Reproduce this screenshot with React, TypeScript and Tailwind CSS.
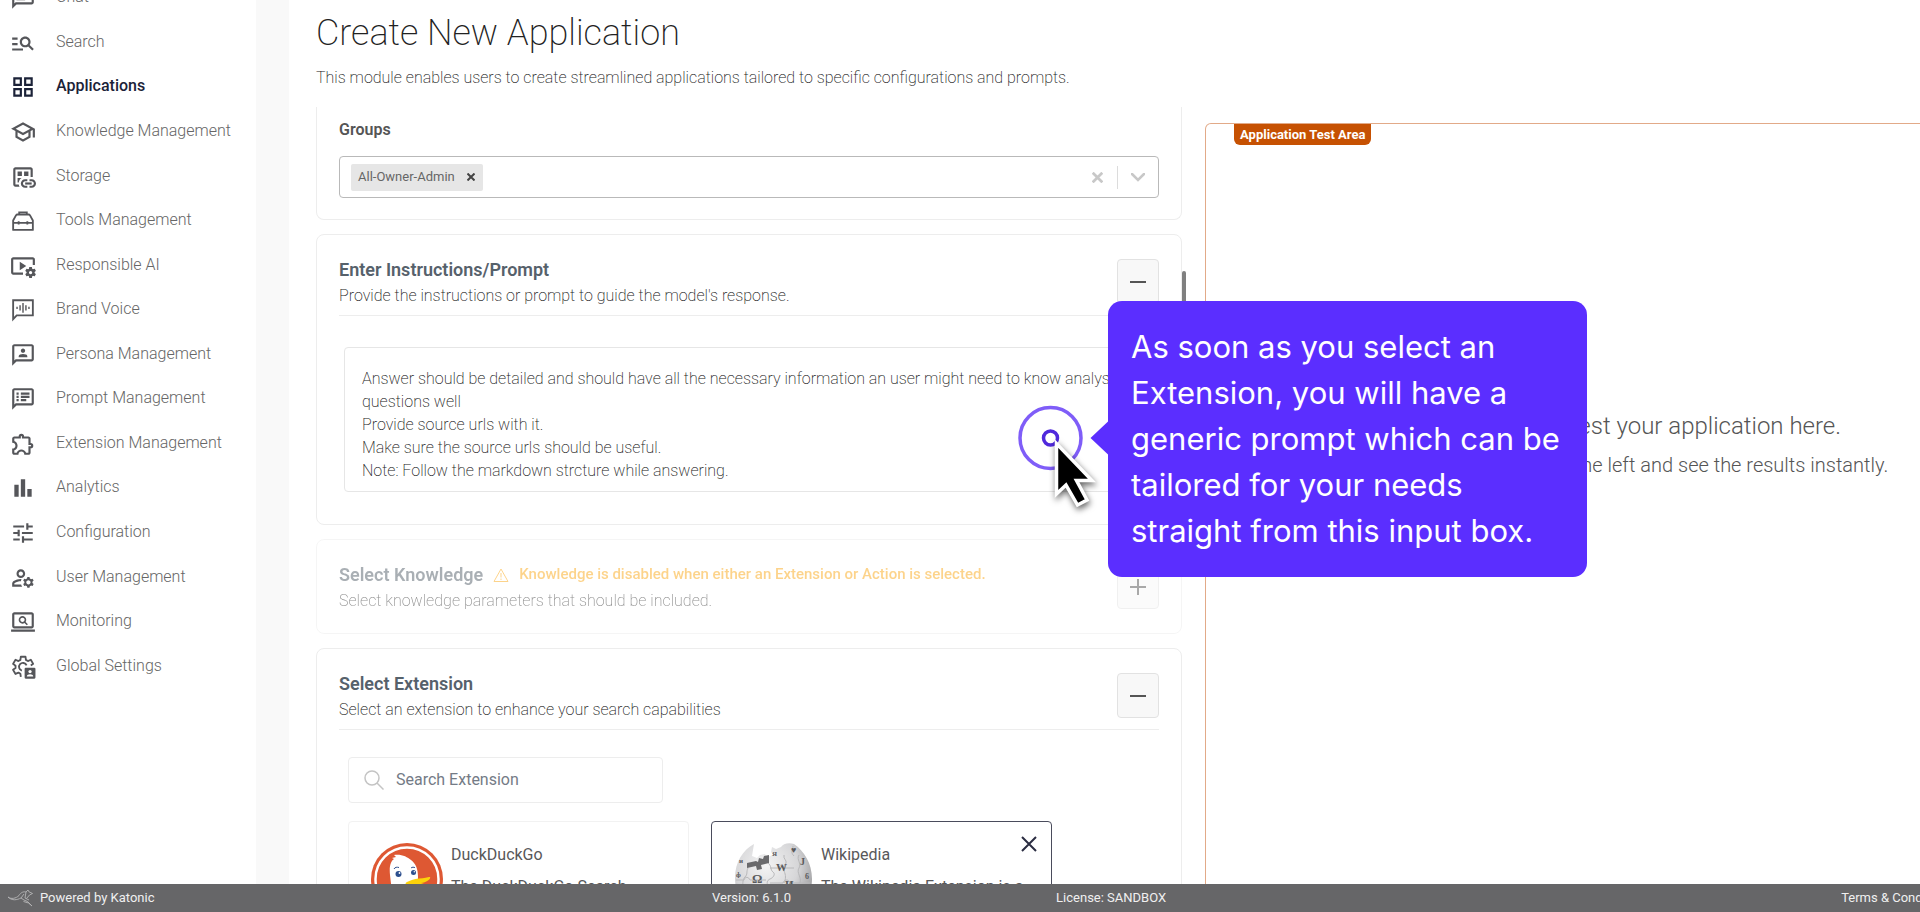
import React, { useState } from 'react';
import type { IconType } from 'react-icons';
import {
  MdBarChart,
  MdManageSearch,
  MdOutline3P,
  MdOutlineChat,
  MdOutlineDatasetLinked,
  MdOutlineExtension,
  MdOutlineGridView,
  MdOutlineManageAccounts,
  MdOutlineSchool,
  MdOutlineScreenSearchDesktop,
  MdOutlineSpeakerNotes,
  MdOutlineTune,
  MdOutlineVideoSettings,
} from 'react-icons/md';

const ToolboxIcon: React.FC = () => (
  <svg width="26" height="26" viewBox="0 0 24 24" fill="none" stroke="currentColor" strokeWidth="1.7">
    <path d="M2.900 20.200V11.500L5.500 6.800Q6 6 7 6h10q1 0 1.500.8l2.600 4.700v8.700z" strokeLinejoin="round" />
    <path d="M8.500 5.800V4h7v1.800M3 13.800h18M8 12.300v3M16 12.300v3" />
  </svg>
);

const VoiceIcon: React.FC = () => (
  <svg width="26" height="26" viewBox="0 0 24 24" fill="none" stroke="currentColor" strokeWidth="1.7">
    <path d="M2.900 20.500V3h18.200v14H6.200z" />
    <path d="M6.500 9v2M9.300 7.500v5M12 5.500v9M14.700 7.500v5M17.500 9v2" strokeWidth="1.300" />
  </svg>
);

const GlobalSettingsIcon: React.FC = () => (
  <svg width="26" height="26" viewBox="0 0 24 24" fill="none">
    <path
      d="M10 21.200 9.600 18.300 7.800 17.200 5.100 18.400 2.800 14.600 5.100 12.900V10.800L2.800 9.100 5.100 5.300 7.800 6.500 9.600 5.400 10 2.500h4.300l.4 2.900 1.800 1.100 2.700-1.200L21.400 9.100 19.200 10.700"
      stroke="currentColor"
      strokeWidth="1.7"
      strokeLinejoin="round"
    />
    <path d="M11 15.300a3.600 3.600 0 1 1 4.300-4.800" stroke="currentColor" strokeWidth="1.7" />
    <rect x="13.500" y="12.800" width="10" height="10" rx="1" fill="currentColor" />
    <circle cx="18.500" cy="16.200" r="1.500" fill="white" />
    <path d="M15.500 20.800c0-1.600 1.500-2.200 3-2.200s3 .6 3 2.200z" fill="white" />
  </svg>
);

const NAV: { label: string; icon: IconType | React.FC; active?: boolean }[] = [
  { label: 'Chat', icon: MdOutlineChat },
  { label: 'Search', icon: MdManageSearch },
  { label: 'Applications', icon: MdOutlineGridView, active: true },
  { label: 'Knowledge Management', icon: MdOutlineSchool },
  { label: 'Storage', icon: MdOutlineDatasetLinked },
  { label: 'Tools Management', icon: ToolboxIcon },
  { label: 'Responsible AI', icon: MdOutlineVideoSettings },
  { label: 'Brand Voice', icon: VoiceIcon },
  { label: 'Persona Management', icon: MdOutline3P },
  { label: 'Prompt Management', icon: MdOutlineSpeakerNotes },
  { label: 'Extension Management', icon: MdOutlineExtension },
  { label: 'Analytics', icon: MdBarChart },
  { label: 'Configuration', icon: MdOutlineTune },
  { label: 'User Management', icon: MdOutlineManageAccounts },
  { label: 'Monitoring', icon: MdOutlineScreenSearchDesktop },
  { label: 'Global Settings', icon: GlobalSettingsIcon },
];

const DEFAULT_PROMPT = `Answer should be detailed and should have all the necessary information an user might need to know analyse the questions well
Provide source urls with it.
Make sure the source urls should be useful.
Note: Follow the markdown strcture while answering.`;

const Sidebar: React.FC = () => (
  <aside className="w-64 shrink-0 bg-white">
    <nav className="-mt-[25px] grid h-[713px] auto-rows-fr">
      {NAV.map(({ label, icon: Icon, active }) => (
        <a
          key={label}
          href="#"
          className={`flex items-center gap-5 pl-[10px] text-base ${
            active ? 'font-medium text-[#1b2238]' : 'font-light text-[#666]'
          }`}
        >
          <span className={`pt-[2px] ${active ? 'text-[#1b2238]' : 'text-[#55565a]'}`}>
            <Icon size={26} />
          </span>
          {label}
        </a>
      ))}
    </nav>
  </aside>
);

interface SectionProps {
  title: string;
  hint: string;
  open?: boolean;
  disabled?: boolean;
  warning?: string;
  className?: string;
  children?: React.ReactNode;
}

const Section: React.FC<SectionProps> = ({ title, hint, open, disabled, warning, className = '', children }) => (
  <section
    className={`rounded-lg border border-[#ededed] px-[22px] pt-[22px] ${disabled ? 'opacity-50' : ''} ${className}`}
  >
    <header className={`flex items-start justify-between pb-[6px] ${open ? 'border-b border-[#ededed]' : ''}`}>
      <div>
        <div className="flex items-center">
          <h2 className="text-lg leading-[25px] font-semibold text-[#56616b]">{title}</h2>
          {warning && (
            <p className="flex items-center text-[15px] leading-[25px] font-medium text-[#fba919]">
              <svg className="mr-[10px] ml-[10px]" width="16" height="16" viewBox="0 0 16 16" fill="none" stroke="currentColor">
                <path d="M8 2 15 14.500H1z" strokeLinejoin="round" />
                <path d="M8 6v4.500M8 11.500v1.500" />
              </svg>
              {warning}
            </p>
          )}
        </div>
        <p className="text-base leading-[27px] font-extralight text-[#222]">{hint}</p>
      </div>
      <button
        aria-label={`Toggle ${title}`}
        disabled={disabled}
        className="mt-[2px] flex h-[45px] w-[42px] shrink-0 items-center justify-center rounded-sm border border-[#e2e2e2] bg-[#f8f8f8] text-[#555]"
      >
        <svg width="18" height="18" viewBox="0 0 18 18" stroke="currentColor" strokeWidth="2">
          <path d={open ? 'M1 9h16' : 'M1 9h16M9 1v16'} />
        </svg>
      </button>
    </header>
    {children}
  </section>
);

const DuckLogo: React.FC = () => (
  <svg className="shrink-0" width="72" height="72" viewBox="0 0 72 72">
    <circle cx="36" cy="36" r="36" fill="#de5833" />
    <circle cx="36" cy="36" r="31.500" fill="none" stroke="white" strokeWidth="2.500" />
    <path d="M23 66 19 32c-1-9 1-14 4-16l-2-1 4-1-2-2c8-1 13 2 17 5 5 4 7 9 7 17l-2 33z" fill="white" />
    <path d="M36 39c4-2 7-3 12-3.500 6-.5 10-2 11-1.500 1 2-3 5-9 6 2 1 4 1 6 2-4 3-14 3-20 2-2-2-2-4 0-5z" fill="#fdd20a" />
    <circle cx="27.500" cy="31" r="3" fill="#2d4f8e" />
    <circle cx="42.500" cy="29.500" r="2.500" fill="#2d4f8e" />
    <circle cx="28.500" cy="30" r="0.900" fill="white" />
    <circle cx="43.300" cy="28.700" r="0.700" fill="white" />
    <path d="M23 26c1-2 3-2 5-1.500M40 25c1-1 3-1 4-.3" fill="none" stroke="#2d4f8e" />
  </svg>
);

const WikiLogo: React.FC = () => (
  <svg className="shrink-0" width="79" height="79" viewBox="0 0 79 79">
    <defs>
      <radialGradient id="globe" cx="0.4" cy="0.3" r="0.7">
        <stop offset="0" stopColor="#f4f4f4" />
        <stop offset="0.6" stopColor="#d6d6d8" />
        <stop offset="1" stopColor="#98989a" />
      </radialGradient>
    </defs>
    <path
      d="M20 1c-11 6-19 18-19 34 0 22 17 40 38.500 40S78 57 78 36C78 20 70 8 60 1c-6-2-11 0-13 3l-5 2-4-2-1 5 2 3-6 2-2-3-5 1-3 3-5-2 1-6z"
      fill="url(#globe)"
    />
    <path d="m13 20 9-2 2 1 1-4 4 1 1-3 5-1v8l-8 2 1 4-5 1-1-4-9 2z" fill="#6a6a6c" />
    <path
      d="M14 25c-2 4 0 6-3 9s-2 8-2 10M34 20c4 3 2 7 5 9s0 6-3 7-4 5-1 8M36 25h9c0-4 5-4 5 0h10M50 12c-1 4 3 5 2 8s-4 4-2 8 2 8 0 12M65 12c-3 5 3 8 0 13s3 9 1 15M2 37h8c1-4 5-3 6 0h16M36 40h13c1-4 6-4 7 0h20M59 3c0 4-3 6 1 10"
      fill="none"
      stroke="#b8b8ba"
    />
    <g fill="#5a5a5c" fontFamily="Liberation Serif, serif" fontWeight="bold">
      <text x="42" y="28" fontSize="11">W</text>
      <text x="18" y="40" fontSize="13">Ω</text>
      <text x="5" y="20" fontSize="7">и</text>
      <text x="2" y="34" fontSize="7">ф</text>
      <text x="38" y="13" fontSize="7">Я</text>
      <text x="57" y="10" fontSize="9">♥</text>
      <text x="66" y="22" fontSize="10">J</text>
      <text x="51" y="45" fontSize="11">И</text>
      <text x="71" y="36" fontSize="8">6</text>
    </g>
  </svg>
);

const Kangaroo: React.FC = () => (
  <svg width="27" height="18" viewBox="0 0 27 18" fill="none" stroke="#b5b5b7" strokeWidth="0.900">
    <path d="M1 8c3 2.500 8 1.500 11-1.500C14 3 17 2.500 19 3l2-2 .8 1.700 3.700 1.800-3 1.500-3 3.500M1 8c4 4 9 3 13 1l3 2 3.500 1.500L25 17l-3.500-3-5-1.500M19 3l-1 6 4 2M14 9l3-4" />
  </svg>
);

const CloseIcon: React.FC<{ size: number; width: number }> = ({ size, width }) => (
  <svg width={size} height={size} viewBox="0 0 16 16" stroke="currentColor" strokeWidth={width}>
    <path d="m1 1 14 14M15 1 1 15" />
  </svg>
);

const GroupsCard: React.FC = () => (
  <section className="rounded-b-lg border border-t-0 border-[#ededed] px-[22px] pt-[11px] pb-[21px]">
    <label htmlFor="groups" className="block text-base leading-6 font-semibold text-[#555]">
      Groups
    </label>
    <div className="mt-[14px] flex h-[42px] items-center rounded border border-[#b9b9b9] pl-[11px]">
      <div className="flex h-[27px] items-center rounded-xs bg-[#e6e6e6] pr-2 pl-[7px]">
        <span className="text-[13px] text-[#666]">All-Owner-Admin</span>
        <button aria-label="Remove All-Owner-Admin" className="ml-3 text-[#444]">
          <CloseIcon size={8} width={4} />
        </button>
      </div>
      <input id="groups" className="min-w-0 flex-1 outline-none" />
      <button aria-label="Clear groups" className="text-[#c8c8c8]">
        <CloseIcon size={11} width={4} />
      </button>
      <span className="ml-[14px] h-[23px] w-px bg-[#dcdcdc]" />
      <button aria-label="Open groups" className="mr-[13px] ml-[13px] text-[#c8c8c8]">
        <svg width="14" height="9" viewBox="0 0 14 9" fill="none" stroke="currentColor" strokeWidth="2.500">
          <path d="m1 1 6 6 6-6" strokeLinecap="round" />
        </svg>
      </button>
    </div>
  </section>
);

const Footer: React.FC = () => (
  <footer className="grid h-7 shrink-0 grid-cols-[712fr_344fr_785fr_194fr] items-center bg-[#666668] text-[13px] text-[#f0f0f0]">
    <div className="flex items-center gap-[6px] pl-[7px]">
      <Kangaroo />
      Powered by Katonic
    </div>
    <div>Version: 6.1.0</div>
    <div>License: SANDBOX</div>
    <a href="#">Terms &amp; Conditions</a>
  </footer>
);

// Guided-tour layer floating above the page
const TourStep: React.FC = () => (
  <>
    <svg className="absolute top-[400px] left-[1012px]" width="96" height="120" viewBox="0 0 96 120">
      <circle cx="38.500" cy="38" r="30.500" fill="none" stroke="#7f5df8" strokeWidth="3.500" />
      <circle cx="38.500" cy="38" r="7" fill="none" stroke="#5029dc" strokeWidth="3.500" />
      <path d="M78.500 38 97 20.500v35z" fill="#5b2eff" />
      <path
        d="M44.500 43.500v50.500l9.500-9 11.500 20 9.500-5-10.500-19.500H80z"
        fill="black"
        stroke="white"
        strokeWidth="3.500"
        className="drop-shadow-[1px_3px_3px_rgba(0,0,0,0.6)]"
      />
    </svg>
    <div className="absolute top-[301px] left-[1108px] w-[479px] rounded-[14px] bg-[#5b2eff] py-[23px] pr-4 pl-[23px] font-[Inter,sans-serif] text-[31px] leading-[46px] text-white">
      As soon as you select an Extension, you will have a generic prompt which can be tailored for your needs straight
      from this input box.
    </div>
  </>
);

export default function App() {
  const [prompt, setPrompt] = useState(DEFAULT_PROMPT);

  return (
    <div className="relative h-screen overflow-hidden bg-white font-[Roboto,sans-serif]">
      <div className="flex h-full w-[106%] flex-col">
        <div className="flex min-h-0 flex-1">
          <Sidebar />
          <div className="w-[33px] shrink-0 bg-[#f9f9f9]" />
          <main className="flex min-w-0 flex-1 flex-col px-[27px]">
            <h1 className="pt-3 text-4xl leading-[42px] font-extralight text-[#222]">Create New Application</h1>
            <p className="mt-[11px] mb-[17px] text-base leading-[25px] font-extralight text-[#222]">
              This module enables users to create streamlined applications tailored to specific configurations and prompts.
            </p>
            <div className="grid min-h-0 flex-1 grid-cols-[870fr_803fr] gap-[19px]">
              <div className="relative flex min-h-0 flex-col overflow-hidden pr-1">
                <div className="flex flex-col gap-[14px]">
                  <GroupsCard />
                  <Section
                    open
                    title="Enter Instructions/Prompt"
                    hint="Provide the instructions or prompt to guide the model's response."
                    className="pb-[32px]"
                  >
                    <textarea
                      aria-label="Instructions"
                      rows={5}
                      value={prompt}
                      onChange={(e) => setPrompt(e.target.value)}
                      className="mx-[5px] mt-[31px] block h-[145px] w-[calc(100%-10px)] resize-none overflow-hidden rounded border border-[#e6e6e6] pt-[19px] pr-1 pb-[9px] pl-[17px] text-base leading-[23px] font-extralight text-[#222] outline-none"
                    />
                  </Section>
                  <Section
                    disabled
                    title="Select Knowledge"
                    warning="Knowledge is disabled when either an Extension or Action is selected."
                    hint="Select knowledge parameters that should be included."
                    className="pb-[13px]"
                  />
                  <Section
                    open
                    title="Select Extension"
                    hint="Select an extension to enhance your search capabilities"
                  >
                    <div className="px-[9px]">
                      <label className="mt-[27px] flex h-[46px] w-[315px] items-center gap-3 rounded border border-[#ededed] pl-[15px]">
                        <svg width="20" height="20" viewBox="0 0 20 20" fill="none" stroke="#c4c4c4" strokeWidth="1.500">
                          <circle cx="8" cy="8" r="7" />
                          <path d="m13 13 6.500 6.500" />
                        </svg>
                        <input
                          aria-label="Search Extension"
                          placeholder="Search Extension"
                          className="min-w-0 flex-1 text-base outline-none placeholder:text-[#747b86]"
                        />
                      </label>
                      <div className="mt-[18px] flex gap-[22px] text-base text-[#58585a]">
                        <article className="flex h-[150px] w-[341px] gap-2 rounded border border-[#f2f2f2] pt-[21px] pr-3 pl-[22px]">
                          <DuckLogo />
                          <div>
                            <h3>DuckDuckGo</h3>
                            <p className="mt-2">The DuckDuckGo Search extension.</p>
                          </div>
                        </article>
                        <article className="relative flex h-[150px] w-[341px] gap-2 rounded border border-[#4a4c5c] pt-[21px] pr-3 pl-[22px]">
                          <WikiLogo />
                          <div>
                            <h3>Wikipedia</h3>
                            <p className="mt-2">The Wikipedia Extension is a search tool.</p>
                          </div>
                          <button aria-label="Remove Wikipedia" className="absolute top-[14px] right-[14px] text-[#2b2d42]">
                            <CloseIcon size={16} width={2} />
                          </button>
                        </article>
                      </div>
                    </div>
                  </Section>
                </div>
                <div className="absolute top-[164px] right-0 h-[130px] w-1 rounded-full bg-[#808080]" />
              </div>
              <section className="mt-4 flex flex-col rounded-tl-md border border-b-0 border-[#e2aa88] pl-7">
                <h2 className="self-start rounded-b-md bg-[#c65102] px-[6px] text-[13px] leading-[21px] font-bold text-white">
                  Application Test Area
                </h2>
                <div className="mr-7 mt-[262px] text-center font-light text-[#555]">
                  <p className="text-2xl leading-[38px]">Configure app and test your application here.</p>
                  <p className="text-xl leading-10">Make all of your changes on the left and see the results instantly.</p>
                </div>
              </section>
            </div>
          </main>
        </div>
        <Footer />
      </div>
      <TourStep />
    </div>
  );
}
